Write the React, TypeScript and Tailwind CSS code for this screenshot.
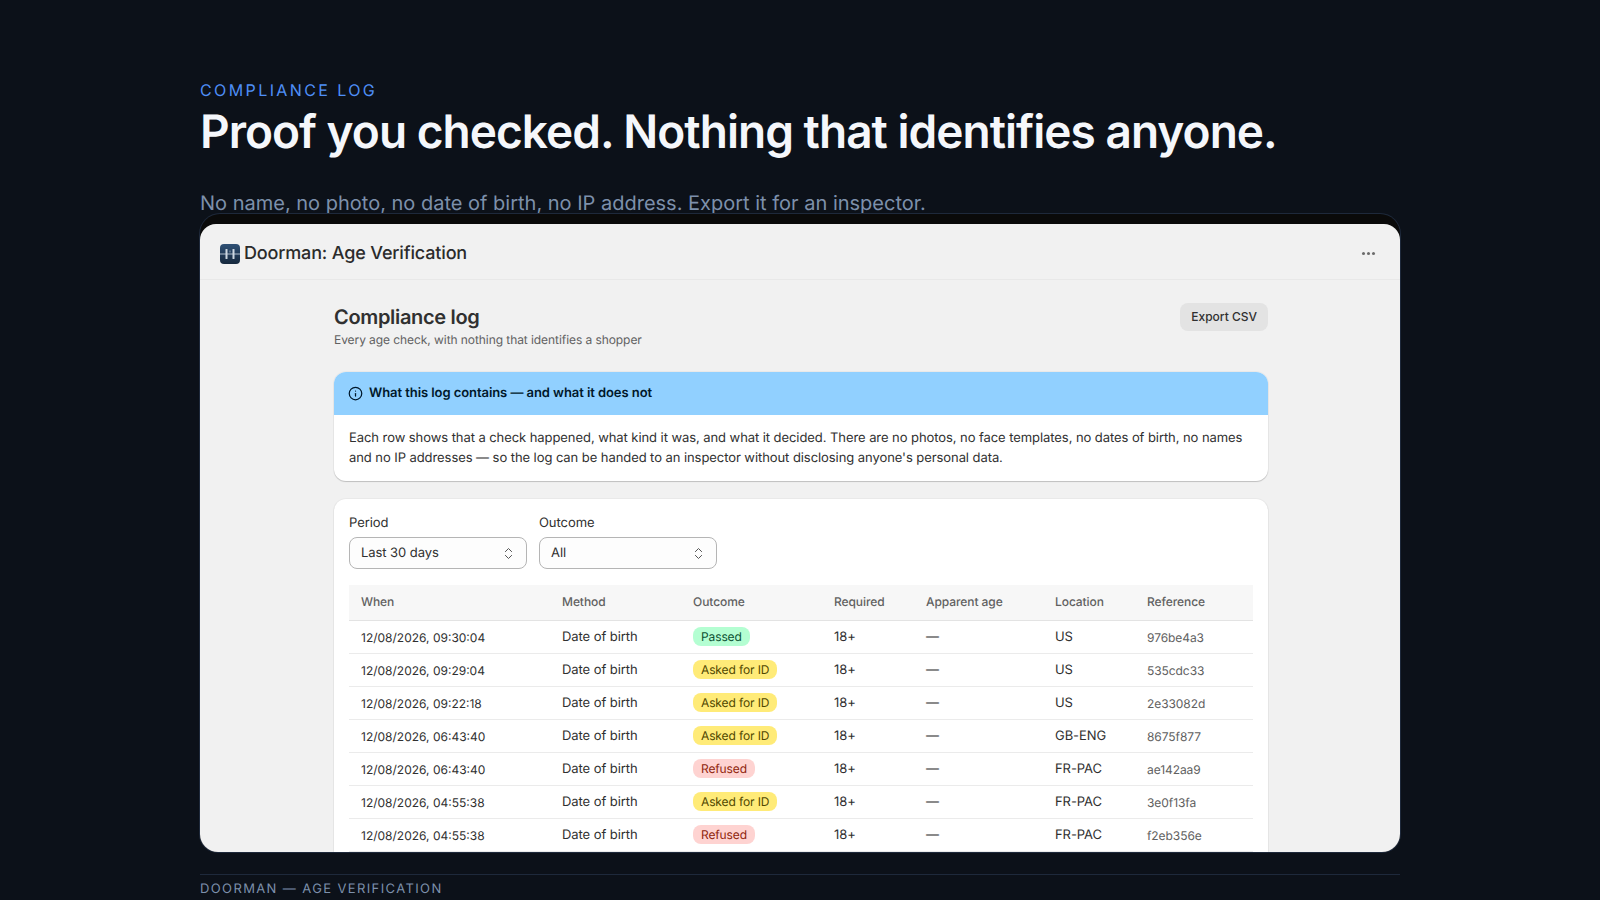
import { ChevronsUpDown, Info } from "lucide-react"

type Row = {
  when: string
  outcome: "Passed" | "Asked for ID" | "Refused"
  location: string
  reference: string
}

const rows: Row[] = [
  { when: "12/08/2026, 09:30:04", outcome: "Passed", location: "US", reference: "976be4a3" },
  { when: "12/08/2026, 09:29:04", outcome: "Asked for ID", location: "US", reference: "535cdc33" },
  { when: "12/08/2026, 09:22:18", outcome: "Asked for ID", location: "US", reference: "2e33082d" },
  { when: "12/08/2026, 06:43:40", outcome: "Asked for ID", location: "GB-ENG", reference: "8675f877" },
  { when: "12/08/2026, 06:43:40", outcome: "Refused", location: "FR-PAC", reference: "ae142aa9" },
  { when: "12/08/2026, 04:55:38", outcome: "Asked for ID", location: "FR-PAC", reference: "3e0f13fa" },
  { when: "12/08/2026, 04:55:38", outcome: "Refused", location: "FR-PAC", reference: "f2eb356e" },
]

const headers = ["When", "Method", "Outcome", "Required", "Apparent age", "Location", "Reference"]
const gridCols = "grid grid-cols-[201px_131px_141px_92px_129px_92px_118px]"

function Badge({ outcome }: { outcome: Row["outcome"] }) {
  const color =
    outcome === "Passed"
      ? "bg-[#b4fed2] text-[#0c5132]"
      : outcome === "Refused"
        ? "bg-[#fed3d1] text-[#8e1f0b]"
        : "bg-[#ffeb78] text-[#4f4700]"
  return <span className={`rounded-lg px-2 py-0.5 text-[12px] leading-4 tracking-[-0.12px] ${color}`}>{outcome}</span>
}

function Select({ label, value }: { label: string; value: string }) {
  return (
    <div className="w-[178px]">
      <div className="mb-1 pt-px text-[13px] leading-[19px] text-[#303030]">{label}</div>
      <div className="flex h-8 items-center justify-between rounded-lg border border-[#b5b5b5] bg-[#fdfdfd] pr-2.5 pl-[11px] text-[13px] text-[#303030]">
        <span className="pt-px">{value}</span>
        <ChevronsUpDown size={15} strokeWidth={1.5} className="text-[#4a4a4a]" />
      </div>
    </div>
  )
}

function AppIcon() {
  return (
    <svg width="20" height="20" viewBox="0 0 20 20" className="shrink-0">
      <defs>
        <linearGradient id="door" x1="0" y1="0" x2="0" y2="1">
          <stop offset="0" stopColor="#2f5075" />
          <stop offset="1" stopColor="#16283d" />
        </linearGradient>
      </defs>
      <rect width="20" height="20" rx="4" fill="url(#door)" />
      <path d="M0 10h20" stroke="#aebccb" strokeWidth="1" />
      <rect x="5.5" y="5" width="2" height="10" rx="0.5" fill="#cdd7e1" />
      <rect x="12.5" y="5" width="2" height="10" rx="0.5" fill="#cdd7e1" />
      <rect x="9.5" y="6.5" width="1" height="2" fill="#8ea2b6" />
    </svg>
  )
}

export default function App() {
  return (
    <div className="flex h-screen flex-col overflow-hidden bg-[#0c1119] px-[200px] pt-[80px] font-['Inter',sans-serif] [text-rendering:geometricPrecision]">
      <div className="text-[16px] leading-5 tracking-[0.15em] text-[#4f8ff7]">COMPLIANCE LOG</div>
      <h1 className="mt-[3px] text-[46px] leading-[58px] font-semibold tracking-[-0.021em] text-[#f5f7fb]">
        Proof you checked. Nothing that identifies anyone.
      </h1>
      <p className="mt-[28px] text-[20px] leading-7 text-[#7d90ab]">
        No name, no photo, no date of birth, no IP address. Export it for an inspector.
      </p>

      <div className="mt-[-3px] min-h-0 flex-1 overflow-hidden rounded-t-[20px] rounded-b-[18px] bg-[#0a0a0a] pt-[10px] ring-1 ring-[#1e293b]">
        <div className="h-full overflow-hidden rounded-t-2xl bg-[#f1f1f1] tracking-[-0.07px]">
          <div className="flex h-[56px] items-center justify-between border-b border-[#e8e8e8] pt-1 pr-[25px] pl-5">
            <div className="flex items-center gap-1 text-[18px] font-medium tracking-[-0.16px] text-[#2b2b2b]">
              <AppIcon />
              Doorman: Age Verification
            </div>
            <div className="flex gap-[2px]">
              <span className="h-[3px] w-[3px] rounded-full bg-[#6b6b6b]" />
              <span className="h-[3px] w-[3px] rounded-full bg-[#6b6b6b]" />
              <span className="h-[3px] w-[3px] rounded-full bg-[#6b6b6b]" />
            </div>
          </div>

          <div className="ml-[134px] w-[934px] pt-[25px]">
            <div className="flex items-start justify-between">
              <div>
                <h2 className="text-[20px] leading-6 font-semibold tracking-[-0.32px] text-[#303030]">Compliance log</h2>
                <p className="mt-[3px] text-[12px] leading-4 text-[#616161]">
                  Every age check, with nothing that identifies a shopper
                </p>
              </div>
              <button className="-mt-0.5 h-7 rounded-lg bg-[#e3e3e3] px-[11px] text-[12px] font-medium tracking-normal text-[#303030]">
                Export CSV
              </button>
            </div>

            <div className="mt-[24px] overflow-hidden rounded-xl bg-white shadow-[0_1px_1px_rgba(0,0,0,0.18),0_0_0_1px_rgba(0,0,0,0.03)]">
              <div className="flex h-[43px] items-center gap-1.5 bg-[#91d0ff] pl-[14px] text-[13px] font-semibold text-[#00182b]">
                <Info size={15} strokeWidth={2} />
                <span className="pt-px">What this log contains — and what it does not</span>
              </div>
              <div className="px-[15px] py-[13px] text-[13px] leading-5 text-[#303030]">
                Each row shows that a check happened, what kind it was, and what it decided. There are no photos, no
                face templates, no dates of birth, no names and no IP addresses — so the log can be handed to an
                inspector without disclosing anyone's personal data.
              </div>
            </div>

            <div className="mt-[18px] rounded-xl bg-white px-[15px] pt-[14px] pb-4 shadow-[0_1px_1px_rgba(0,0,0,0.18),0_0_0_1px_rgba(0,0,0,0.03)]">
              <div className="flex gap-3">
                <Select label="Period" value="Last 30 days" />
                <Select label="Outcome" value="All" />
              </div>
              <div className="mt-4">
                <div className={`${gridCols} h-[36px] items-center border-b border-[#e3e3e3] bg-[#f7f7f7] pb-px text-[12px] font-[450] text-[#616161]`}>
                  {headers.map((h) => (
                    <div key={h} className="px-3">
                      {h}
                    </div>
                  ))}
                </div>
                {rows.map((r) => (
                  <div
                    key={r.reference}
                    className={`${gridCols} h-[33px] items-center border-b border-[#ebebeb] pt-px text-[13px] text-[#303030]`}
                  >
                    <div className="px-3 text-[12px] tracking-normal">{r.when}</div>
                    <div className="px-3">Date of birth</div>
                    <div className="px-3">
                      <Badge outcome={r.outcome} />
                    </div>
                    <div className="px-3">18+</div>
                    <div className="px-3">—</div>
                    <div className="px-3">{r.location}</div>
                    <div className="px-3 text-[12px] text-[#616161]">{r.reference}</div>
                  </div>
                ))}
              </div>
            </div>
          </div>
        </div>
      </div>

      <div className="mt-[22px] h-[26px] shrink-0 border-t border-[#1e293b] pt-[6px] text-[13px] leading-4 tracking-[1.38px] text-[#7d90ab]">
        DOORMAN — AGE VERIFICATION
      </div>
    </div>
  )
}
